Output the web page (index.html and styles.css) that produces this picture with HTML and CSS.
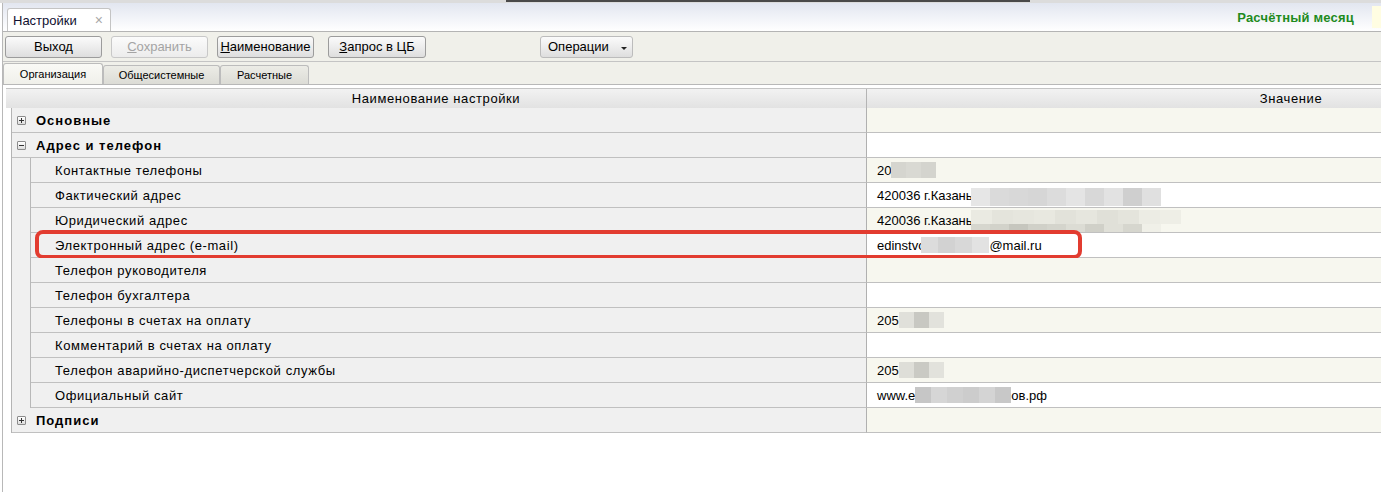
FILE: index.html
```html
<!DOCTYPE html>
<html lang="ru">
<head>
  <meta charset="UTF-8" />
  <title>Настройки</title>
  <link rel="stylesheet" href="styles.css">
</head>
<body>
  <div class="topline"><span class="scroll"></span></div>
  <div class="window">

    <!-- window tab strip -->
    <div class="tabbar">
      <div class="doc-tab">Настройки <span class="close">×</span></div>
      <div class="month">Расчётный месяц</div>
      <div class="month-box"></div>
    </div>

    <!-- toolbar -->
    <div class="toolbar">
      <button class="btn">Выход</button>
      <button class="btn disabled"><u>С</u>охранить</button>
      <button class="btn"><u>Н</u>аименование</button>
      <button class="btn wide-gap"><u>З</u>апрос в ЦБ</button>
      <button class="btn ops">Операции <span class="arrow"></span></button>
    </div>

    <!-- page tabs -->
    <div class="pagetabs">
      <div class="ptab active">Организация</div>
      <div class="ptab">Общесистемные</div>
      <div class="ptab">Расчетные</div>
    </div>

    <div class="gridwrap">
      <div class="grid-head">
        <div class="hcell name">Наименование настройки</div>
        <div class="hcell value">Значение</div>
      </div>

      <div class="row group">
        <div class="ncell"><span class="toggle plus"></span>Основные</div>
        <div class="vcell cream"></div>
      </div>
      <div class="row group">
        <div class="ncell"><span class="toggle minus"></span>Адрес и телефон</div>
        <div class="vcell"></div>
      </div>

      <div class="row child">
        <div class="indent"></div>
        <div class="ncell">Контактные телефоны</div>
        <div class="vcell cream">20<span class="blur"><i style="background:#d5d5cf"></i><i style="background:#d9d9d3"></i><i style="background:#d4d4ce"></i></span></div>
      </div>
      <div class="row child">
        <div class="indent"></div>
        <div class="ncell">Фактический адрес</div>
        <div class="vcell">420036 г.Казань<span class="blur addr1"><i style="background:#e6e6e6"></i><i style="background:#dadada"></i><i style="background:#d8d8d8"></i><i style="background:#d6d6d6"></i><i style="background:#dcdcdc"></i><i style="background:#e4e4e4"></i><i style="background:#d8d8d8"></i><i style="background:#e2e2e2"></i><i style="background:#cfcfcf"></i><i style="background:#e0e0e0"></i></span></div>
      </div>
      <div class="row child">
        <div class="indent"></div>
        <div class="ncell">Юридический адрес</div>
        <div class="vcell cream">420036 г.Казань<span class="blur addr2"><span class="line top"><i style="background:#eaeae2"></i><i style="background:#e4e4dc"></i><i style="background:#e6e6de"></i><i style="background:#e8e8e0"></i><i style="background:#e2e2da"></i><i style="background:#e6e6de"></i><i style="background:#e0e0d8"></i><i style="background:#e4e4dc"></i><i style="background:#ececE4"></i><i style="background:#eeeee6"></i></span><span class="line bottom"><i style="background:#d6d6ce"></i><i style="background:#d2d2ca"></i><i style="background:#c6c6be"></i><i style="background:#d0d0c8"></i><i style="background:#d4d4cc"></i><i style="background:#dcdcd4"></i><i style="background:#d0d0c8"></i><i style="background:#e0e0d8"></i><i style="background:#d6d6ce"></i><i style="background:#f0f0e8"></i></span></span></div>
      </div>
      <div class="row child">
        <div class="indent"></div>
        <div class="ncell">Электронный адрес (e-mail)</div>
        <div class="vcell">edinstvo<span class="blur mail"><i style="background:#dcdcdc"></i><i style="background:#d2d2d2"></i><i style="background:#d8d8d8"></i><i style="background:#e2e2e2"></i></span>@mail.ru</div>
        <div class="mark"></div>
      </div>
      <div class="row child">
        <div class="indent"></div>
        <div class="ncell">Телефон руководителя</div>
        <div class="vcell cream"></div>
      </div>
      <div class="row child">
        <div class="indent"></div>
        <div class="ncell">Телефон бухгалтера</div>
        <div class="vcell"></div>
      </div>
      <div class="row child">
        <div class="indent"></div>
        <div class="ncell">Телефоны в счетах на оплату</div>
        <div class="vcell cream">205<span class="blur"><i style="background:#e0e0da"></i><i style="background:#c8c8c2"></i><i style="background:#e2e2dc"></i></span></div>
      </div>
      <div class="row child">
        <div class="indent"></div>
        <div class="ncell">Комментарий в счетах на оплату</div>
        <div class="vcell"></div>
      </div>
      <div class="row child">
        <div class="indent"></div>
        <div class="ncell">Телефон аварийно-диспетчерской службы</div>
        <div class="vcell cream">205<span class="blur"><i style="background:#deded8"></i><i style="background:#cacac4"></i><i style="background:#e2e2dc"></i></span></div>
      </div>
      <div class="row child">
        <div class="indent"></div>
        <div class="ncell">Официальный сайт</div>
        <div class="vcell">www.e<span class="blur site"><i style="background:#c6c6c6"></i><i style="background:#d6d6d6"></i><i style="background:#d0d0d0"></i><i style="background:#cccccc"></i><i style="background:#d4d4d4"></i><i style="background:#c8c8c8"></i></span>ов.рф</div>
      </div>
      <div class="row group">
        <div class="ncell"><span class="toggle plus"></span>Подписи</div>
        <div class="vcell cream"></div>
      </div>
    </div>

  </div>
</body>
</html>
```

FILE: styles.css
```css
html, body {
  margin: 0;
  padding: 0;
  background: #ffffff;
  font-family: "Liberation Sans", Arial, sans-serif;
  font-size: 13px;
  color: #000;
  overflow: hidden;
}

.topline {
  height: 3px;
  background: #dcdcdc;
  position: relative;
}

.topline .scroll {
  position: absolute;
  left: 506px;
  width: 524px;
  top: 0;
  height: 2px;
  background: #4a4a4a;
}

.window {
  margin-left: 2px;
  border-left: 1px solid #b8b8b8;
  height: 489px;
}

/* tab strip */
.tabbar {
  height: 28px;
  display: flex;
  align-items: flex-end;
  padding-left: 4px;
  background: linear-gradient(#e2e6f0, #ffffff);
  border-bottom: 1px solid #b4b4b4;
}

.doc-tab {
  width: 104px;
  height: 23px;
  box-sizing: border-box;
  background: #ffffff;
  border: 1px solid #c4c4c4;
  border-bottom: none;
  border-radius: 3px 3px 0 0;
  padding: 4px 0 0 5px;
  color: #101030;
  position: relative;
}

.doc-tab .close {
  position: absolute;
  right: 7px;
  top: 3px;
  color: #a8a8a8;
  font-size: 14px;
}

.month {
  margin-left: auto;
  align-self: center;
  color: #1e8b1e;
  font-weight: bold;
  margin-right: 18px;
  letter-spacing: 0.2px;
}

.month-box {
  align-self: flex-start;
  margin-top: 3px;
  width: 9px;
  height: 22px;
  background: #fffde2;
}

/* toolbar */
.toolbar {
  height: 29px;
  display: flex;
  align-items: center;
  gap: 9px;
  padding-left: 2px;
  background: #f0f0ea;
  border-bottom: 1px solid #c4c4c4;
}

.btn {
  width: 97px;
  height: 22px;
  font-family: inherit;
  font-size: 13px;
  color: #000;
  border: 1px solid #9c9c9c;
  border-radius: 3px;
  background: linear-gradient(#fbfbfb, #dedede);
  padding: 0;
}

.btn u {
  text-decoration: underline;
}

.btn.disabled {
  color: #a4a4a4;
  border-color: #c8c8c8;
  background: linear-gradient(#fbfbfb, #ececec);
}

.btn.wide-gap {
  margin-left: 5px;
  width: 98px;
}

.btn.ops {
  margin-left: 105px;
  width: 93px;
  text-align: left;
  padding-left: 7px;
  border-color: #bcbcbc;
  position: relative;
}

.btn.ops .arrow {
  position: absolute;
  right: 5px;
  top: 10px;
  border-left: 3px solid transparent;
  border-right: 3px solid transparent;
  border-top: 3px solid #222;
}

/* page tabs */
.pagetabs {
  height: 22px;
  display: flex;
  align-items: flex-end;
  background: #f0f0ea;
  border-bottom: 1px solid #b8b8b8;
}

.ptab {
  height: 19px;
  box-sizing: border-box;
  border: 1px solid #bcbcbc;
  border-bottom: none;
  border-radius: 3px 3px 0 0;
  background: linear-gradient(#ececE6, #dcdcd6);
  font-size: 11px;
  text-align: center;
  padding-top: 3px;
  width: 117px;
}

.ptab.active {
  width: 100px;
  height: 21px;
  padding-top: 4px;
  background: linear-gradient(#fafaf6, #f0f0ea);
}

.ptab:last-child {
  width: 89px;
}

/* grid */
.gridwrap {
  padding: 3px 0 0 3px;
  background: #ffffff;
}

.grid-head {
  display: flex;
  height: 20px;
  box-sizing: border-box;
  border-top: 1px solid #c4c4c4;
  background: linear-gradient(#f2f2f2, #e2e2e2);
}

.hcell {
  text-align: center;
  line-height: 19px;
  letter-spacing: 0.6px;
  white-space: nowrap;
  overflow: hidden;
}

.hcell.name {
  flex: none;
  width: 861px;
  box-sizing: border-box;
  border-right: 1px solid #b4b4b4;
}

.hcell.value {
  flex: 1;
  padding-left: 334px;
}

.row {
  display: flex;
  height: 25px;
  margin-left: 5px;
  border-left: 1px solid #b4b4b4;
  position: relative;
}

.ncell {
  width: 855px;
  box-sizing: border-box;
  background: #f0f0f0;
  border-right: 1px solid #b0b0b0;
  border-bottom: 1px solid #c0c0c0;
  display: flex;
  align-items: center;
  letter-spacing: 0.6px;
}

.vcell {
  flex: 1;
  box-sizing: border-box;
  background: #ffffff;
  border-bottom: 1px solid #c0c0c0;
  display: flex;
  align-items: center;
  padding-left: 10px;
  white-space: nowrap;
  overflow: hidden;
}

.vcell.cream {
  background: #f7f7ef;
}

.group .ncell {
  font-weight: bold;
  padding-left: 5px;
  letter-spacing: 1px;
}

.toggle {
  width: 9px;
  height: 9px;
  box-sizing: border-box;
  border: 1px solid #8c8c8c;
  border-radius: 1px;
  background: linear-gradient(#ffffff, #dcdcdc);
  margin-right: 10px;
  position: relative;
}

.toggle::before {
  content: "";
  position: absolute;
  left: 1px;
  top: 3px;
  width: 5px;
  height: 1px;
  background: #333;
}

.toggle.plus::after {
  content: "";
  position: absolute;
  left: 3px;
  top: 1px;
  width: 1px;
  height: 5px;
  background: #333;
}

.indent {
  width: 19px;
  box-sizing: border-box;
  background: #f0f0f0;
  border-right: 1px solid #b8b8b8;
}

.child .ncell {
  width: 836px;
  padding-left: 24px;
}

/* pixelated parts of the value column */
.blur {
  display: inline-flex;
  height: 16px;
}

.blur i {
  width: 15px;
  height: 100%;
}

.addr1 {
  margin-left: -2px;
  height: 18px;
  margin-top: 4px;
}

.addr1 i {
  width: 19px;
}

.addr2 {
  margin-left: -2px;
  flex-direction: column;
  height: 22px;
  margin-top: 1px;
}

.addr2 .line {
  display: flex;
}

.addr2 .top {
  height: 14px;
}

.addr2 .top i {
  width: 21px;
}

.addr2 .bottom {
  height: 8px;
}

.addr2 .bottom i {
  width: 19px;
}

.mail {
  margin-left: -4px;
}

.mail i {
  width: 17px;
}

.site i {
  width: 16px;
}

.mark {
  position: absolute;
  left: 23px;
  top: -3px;
  width: 1047px;
  height: 29px;
  box-sizing: border-box;
  border: 4px solid #e23c30;
  border-radius: 8px;
}
```
